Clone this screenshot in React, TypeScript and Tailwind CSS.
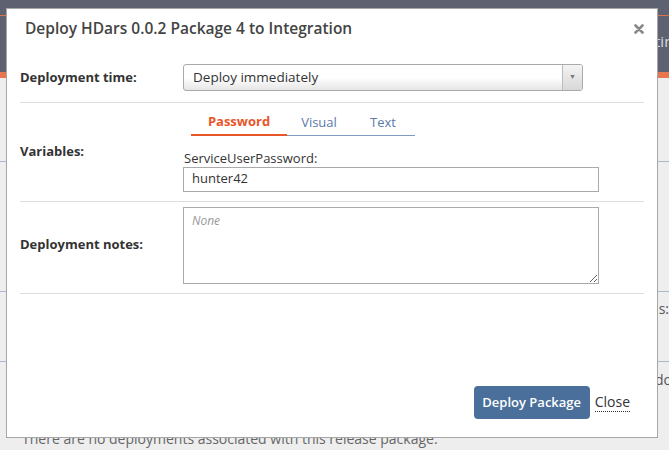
import React from "react";

const font = { fontFamily: '"Open Sans", "Liberation Sans", sans-serif' };

export default function App() {
  return (
    <div className="relative w-[669px] h-[450px] overflow-hidden bg-[#eeeeee]" style={font}>
      {/* Background page */}
      <div className="flex flex-col">
        <div className="h-[72px] bg-[#5e616f] flex flex-col">
          <div className="h-[16px] border-b border-[#d9744f]" />
          <div className="flex-1 flex justify-end items-center pb-[6px]">
            <div className="w-[14px] overflow-hidden whitespace-nowrap text-[15px] text-[#d8d8e0]">ting</div>
          </div>
        </div>
        <div className="h-[6px] bg-[#e8774f]" />
        <div className="h-[84px] border-b border-[#a9b8cc]" />
        <div className="h-[130px] border-b border-[#a9b8cc]" />
        <div className="h-[70px] border-b border-[#a9b8cc] flex justify-end pt-[6px]">
          <span className="text-[14px] text-[#555] whitespace-nowrap">Status:</span>
        </div>
        <div className="h-[64px] flex justify-end pt-[7px]">
          <div className="w-[14px] overflow-hidden whitespace-nowrap text-[14px] text-[#555]">download</div>
        </div>
        <div className="pl-[22px] pt-[2px] text-[14px] text-[#666] whitespace-nowrap">
          There are no deployments associated with this release package.
        </div>
      </div>

      {/* Modal */}
      <div className="absolute left-[6px] top-[8px] w-[652px] h-[430px] bg-white border border-[#a6a6a6] flex flex-col">
        <div className="h-[40px] flex items-center justify-between pl-[18px] pr-[13px]">
          <span className="text-[15.5px] font-semibold text-[#444]">Deploy HDars 0.0.2 Package 4 to Integration</span>
          <svg width="10" height="10" viewBox="0 0 10 10" className="mb-[1px]">
            <path d="M1.5 1.5 L8.5 8.5 M8.5 1.5 L1.5 8.5" stroke="#888" strokeWidth="2.6" strokeLinecap="round" />
          </svg>
        </div>
        <div className="px-[13px] flex flex-col">
          {/* Row 1 */}
          <div className="flex items-center border-b border-[#dddddd] pt-[15px] pb-[11px]">
            <div className="w-[163px] text-[13px] font-bold text-[#333]">Deployment time:</div>
            <div className="w-[400px] h-[27px] border border-[#aaaaaa] rounded-[3px] flex bg-gradient-to-b from-white from-50% to-[#e6e6e6] overflow-hidden">
              <div className="flex-1 flex items-center pl-[9px] text-[13.5px] text-[#333]">Deploy immediately</div>
              <div className="w-[20px] border-l border-[#bbbbbb] flex items-center justify-center bg-gradient-to-b from-[#f4f4f4] to-[#d8d8d8]">
                <span className="text-[7px] text-[#777]">▼</span>
              </div>
            </div>
          </div>
          {/* Row 2 */}
          <div className="flex items-center border-b border-[#dddddd] pt-[9px] pb-[9px]">
            <div className="w-[163px] text-[13px] font-bold text-[#333]">Variables:</div>
            <div className="flex flex-col">
              <div className="flex ml-[8px] text-[13px]">
                <div className="w-[96px] text-center border-b-2 border-[#e8572a] text-[#e8572a] font-bold pb-[1px]">Password</div>
                <div className="w-[64px] text-center border-b border-[#7f9bc0] text-[#5b7aa8] pb-[2px] mt-[1px]">Visual</div>
                <div className="w-[64px] text-center border-b border-[#7f9bc0] text-[#5b7aa8] pb-[2px] mt-[1px]">Text</div>
              </div>
              <div className="mt-[13px] text-[13px] text-[#333] leading-[18px] pl-[1px]">ServiceUserPassword:</div>
              <div className="w-[416px] h-[25px] border border-[#aaaaaa] flex items-center pl-[8px] text-[13px] text-[#333]">hunter42</div>
            </div>
          </div>
          {/* Row 3 */}
          <div className="flex items-center border-b border-[#dddddd] pt-[5px] pb-[9px]">
            <div className="w-[163px] text-[13px] font-bold text-[#333]">Deployment notes:</div>
            <textarea
              className="w-[416px] h-[77px] border border-[#aaaaaa] px-[8px] py-[4px] text-[12px] text-[#333] placeholder:italic placeholder:text-[#999] outline-none"
              style={font}
              placeholder="None"
              defaultValue=""
            />
          </div>
        </div>
        <div className="flex-1 flex items-end justify-end pr-[27px] pb-[18px]">
          <button className="h-[33px] w-[116px] rounded-[4px] bg-[#4a6f9a] text-white text-[13px] font-semibold" style={font}>
            Deploy Package
          </button>
          <span className="ml-[5px] mb-[7px] text-[14px] text-[#333] border-b border-dotted border-[#333] leading-[18px]">Close</span>
        </div>
      </div>
    </div>
  );
}
